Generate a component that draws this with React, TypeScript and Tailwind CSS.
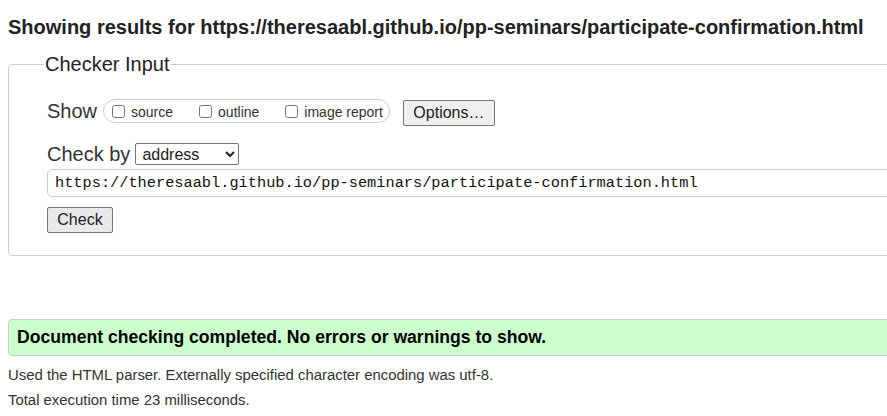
export default function App() {
  const url = 'https://theresaabl.github.io/pp-seminars/participate-confirmation.html'

  return (
    <div className="w-[887px] h-[416px] overflow-hidden bg-white text-[#333] font-['Liberation_Sans',Arial,sans-serif]">
      <div className="w-[920px]">
        <h2 className="pt-[15px] pl-[8px] text-[20px] leading-[24px] font-bold text-[#222]">
          Showing results for {url}
        </h2>

        <fieldset className="mt-[13px] ml-[8px] border border-[#ccc] rounded-[4px] pl-[35px] pb-[22px]">
          <legend className="px-[1px] text-[20px] leading-[24px] text-[#222]">Checker Input</legend>
          <div className="pl-[3px]">
            <div className="flex items-center mt-[22px] h-[26px]">
              <span className="text-[20px] leading-[24px]">Show</span>
              <div className="ml-[6px] flex items-center h-[24px] border border-[#ccc] rounded-full pl-[8px] pr-[6px] text-[14px]">
                <label className="flex items-center">
                  <input type="checkbox" className="w-[13px] h-[13px] m-0" />
                  <span className="ml-[6px] mt-[3px]">source</span>
                </label>
                <label className="flex items-center ml-[26px]">
                  <input type="checkbox" className="w-[13px] h-[13px] m-0" />
                  <span className="ml-[6px] mt-[3px]">outline</span>
                </label>
                <label className="flex items-center ml-[26px]">
                  <input type="checkbox" className="w-[13px] h-[13px] m-0" />
                  <span className="ml-[6px] mt-[3px]">image report</span>
                </label>
              </div>
              <button className="ml-[13px] mt-[3px] h-[26px] w-[92px] text-[16px] leading-[20px] text-[#222] bg-[#efefef] border border-[#767676] rounded-[2px]">
                Options…
              </button>
            </div>

            <div className="flex items-center mt-[18px] h-[24px]">
              <span className="text-[20px] leading-[24px]">Check by</span>
              <select
                defaultValue="address"
                className="ml-[5px] w-[104px] h-[22px] text-[16px] text-[#222] border border-[#767676] rounded-[2px] bg-white pl-[2px]"
              >
                <option value="address">address</option>
                <option value="upload">file upload</option>
                <option value="direct">text input</option>
              </select>
            </div>

            <input
              type="text"
              defaultValue={url}
              className="mt-[3px] block w-[860px] h-[28px] border border-[#ccc] rounded-[5px] px-[7px] text-[15.3px] text-[#111] font-['Liberation_Mono',Consolas,monospace] outline-none"
            />

            <button className="mt-[10px] block h-[26px] w-[66px] text-[16px] leading-[20px] text-[#222] bg-[#e9e9e9] border border-[#767676] rounded-[2px]">
              Check
            </button>
          </div>
        </fieldset>

        <div className="mt-[63px] ml-[8px] h-[37px] flex items-center border border-[#cccccc] rounded-[4px] bg-[#ccffcc] pl-[8px]">
          <p className="text-[17.6px] font-bold text-black">Document checking completed. No errors or warnings to show.</p>
        </div>

        <p className="ml-[8px] mt-[10px] text-[14.9px] leading-[18px]">
          Used the HTML parser. Externally specified character encoding was utf-8.
        </p>
        <p className="ml-[8px] mt-[7px] text-[14.9px] leading-[18px]">Total execution time 23 milliseconds.</p>
      </div>
    </div>
  )
}
